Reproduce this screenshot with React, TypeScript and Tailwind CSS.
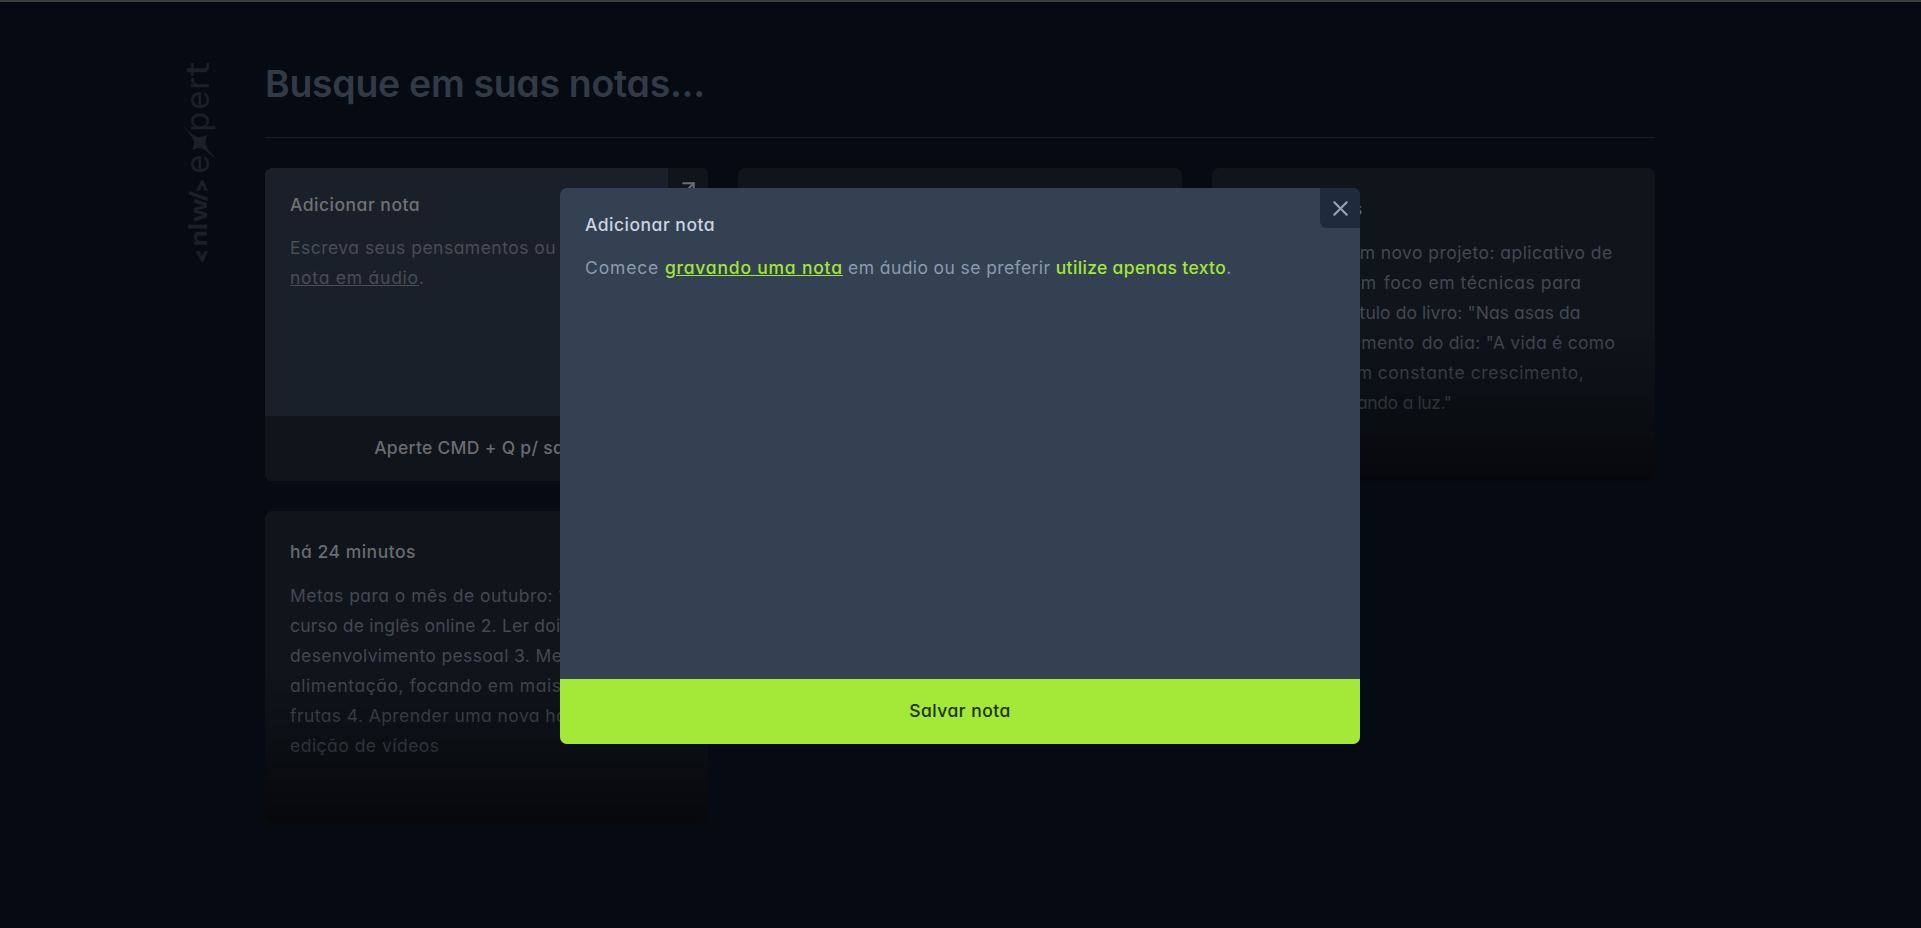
import { ArrowUpRight, X } from "lucide-react";
import type { ReactNode } from "react";

type Line = { prefix?: string; prefixClass?: string; text: string; spacing: string };

const goals: Line[] = [
  { text: "Metas para o mês de outubro: 1. Iniciar", spacing: "tracking-[0.46px]" },
  { text: "curso de inglês online 2. Ler dois livros", spacing: "tracking-[0.2px]" },
  { text: "desenvolvimento pessoal 3. Melhorar", spacing: "tracking-[0.36px]" },
  { text: "alimentação, focando em mais verdes", spacing: "tracking-[0.55px]" },
  { text: "frutas 4. Aprender uma nova habilidade", spacing: "tracking-[0.42px]" },
  { text: "edição de vídeos", spacing: "tracking-[0.48px]" },
];

const ideas: Line[] = [
  { prefix: "Ideias para um", prefixClass: "w-[139px]", text: "novo projeto: aplicativo de", spacing: "tracking-[0.45px]" },
  { prefix: "meditação com", prefixClass: "w-[140px]", text: "foco em técnicas para", spacing: "tracking-[0.57px] [&>*:last-child]:pl-0.5" },
  { prefix: "dormir. Título", prefixClass: "w-[154px]", text: 'do livro: "Nas asas da', spacing: "tracking-[0.06px]" },
  { prefix: 'vida". Pensamento', prefixClass: "w-[178px]", text: 'do dia: "A vida é como', spacing: "tracking-[0.28px] [&>*:last-child]:pl-0.5" },
  { prefix: "um jardim em", prefixClass: "w-[136px]", text: "constante crescimento,", spacing: "tracking-[0.57px]" },
  { prefix: "sempre buscando", prefixClass: "w-[161px]", text: 'a luz."', spacing: "tracking-[-0.4px]" },
];

function Logo() {
  return (
    <svg width="40" height="204" viewBox="0 0 40 204" className="shrink-0 overflow-visible" fill="#1a1f28">
      <g transform="translate(0 202) rotate(-90)">
        <g fontFamily="Open Sans" fontWeight="800">
          <text x="2" y="29" fontSize="19" stroke="#1a1f28" strokeWidth="1">&lt;</text>
          <text x="17.2" y="27" fontSize="24" fontWeight="700" textLength="17" lengthAdjust="spacingAndGlyphs">n</text>
          <text x="33.6" y="27" fontSize="25" fontWeight="700">l</text>
          <text x="42" y="27" fontSize="24" fontWeight="700" textLength="23.5" lengthAdjust="spacingAndGlyphs">w</text>
          <text x="62.5" y="27.5" fontSize="26" fontWeight="700">/</text>
          <text x="73" y="29" fontSize="19" stroke="#1a1f28" strokeWidth="1">&gt;</text>
        </g>
        <g fontFamily="Inter" fontSize="33">
          <text x="90.3 132.3 154.3 174.3" y="29">eper</text>
          <text x="187.6" y="29" textLength="15" lengthAdjust="spacingAndGlyphs">t</text>
        </g>
        <path d="M139 2C131 10 127 15 127 19C127 23 129 26 130 28C127 26 124 25.5 121 25.5C116 26 110 32 104 37C111 29 116 24 116 19.5C116 16 115 14 113 11.5C116 13.5 119 14 122 14C127 13 133 7 139 2Z" />
      </g>
    </svg>
  );
}

function NoteCard({ date, lines = [] }: { date: string; lines?: Line[] }) {
  return (
    <article className="relative flex flex-col gap-4 overflow-hidden rounded-[7px] bg-[#10141b] px-[25px] pt-7">
      <h2 className="pb-px text-[17.5px] leading-[25px] font-medium tracking-[0.5px] text-[#696b70]">{date}</h2>
      <div className="text-[17.5px] leading-[30px] whitespace-nowrap text-[#444852]">
        {lines.map((line) => (
          <p key={line.text} className={`flex gap-[5px] ${line.spacing}`}>
            {line.prefix && <span className={`flex shrink-0 justify-end ${line.prefixClass}`}>{line.prefix}</span>}
            <span>{line.text}</span>
          </p>
        ))}
      </div>
      <div className="absolute inset-x-0 bottom-0 h-1/2 bg-linear-to-t from-black/60 to-black/0" />
    </article>
  );
}

function NewNoteCard() {
  return (
    <article className="relative flex flex-col overflow-hidden rounded-[7px] bg-[#1a2029]">
      <div className="flex flex-1 flex-col gap-[15px] p-[25px]">
        <h2 className="pb-0.5 text-[17.5px] leading-[23px] font-medium tracking-[0.5px] text-[#707275]">Adicionar nota</h2>
        <div className="text-[17.5px] leading-[30px] whitespace-nowrap text-[#484d57]">
          <p className="tracking-[0.48px]">Escreva seus pensamentos ou grave uma</p>
          <p>
            <span className="tracking-[0.76px] underline">nota em áudio</span>.
          </p>
        </div>
      </div>
      <footer className="bg-[#10141b] pt-[19px] pb-[21px] text-center text-[17.5px] leading-[25px] font-medium tracking-[0.29px] text-[#6a6c71]">
        <span className="inline-block w-[225px] text-left whitespace-nowrap">Aperte CMD + Q p/ salvar</span>
      </footer>
      <button className="absolute top-0 right-0 rounded-bl-[7px] bg-[#10141b] p-[7.5px] text-[#6a6d73]">
        <ArrowUpRight size={25} />
      </button>
    </article>
  );
}

function Accent({ className, children }: { className: string; children: ReactNode }) {
  return <button className={`font-medium text-[#a3e635] ${className}`}>{children}</button>;
}

function NewNoteDialog() {
  return (
    <div
      role="dialog"
      className="absolute top-[188px] left-[560px] flex h-[556px] w-[800px] flex-col overflow-hidden rounded-[7px] bg-[#334153]"
    >
      <button className="absolute top-0 right-0 rounded-bl-[7px] bg-[#1f2a3c] p-[7.5px] text-[#94a3b8]">
        <X size={25} />
      </button>
      <div className="flex flex-1 flex-col gap-[15px] p-[25px] text-[17.5px]">
        <h2 className="pb-0.5 leading-[23px] font-medium tracking-[0.5px] text-[#cbd5e1]">Adicionar nota</h2>
        <p className="leading-[30px] whitespace-pre text-[#8c9bb0]">
          <span className="tracking-[0.85px]">{"Comece "}</span>
          <Accent className="tracking-[0.79px] underline">gravando uma nota</Accent>
          <span className="tracking-[0.4px]">{" em áudio ou se preferir "}</span>
          <Accent className="tracking-[0.34px]">utilize apenas texto</Accent>.
        </p>
      </div>
      <button className="bg-[#a4e938] pt-[19px] pb-[21px] text-[17.5px] leading-[25px] font-medium tracking-[0.47px] text-[#1f300e]">
        Salvar nota
      </button>
    </div>
  );
}

export default function App() {
  return (
    <div className="relative h-[928px] w-full overflow-hidden border-t-2 border-[#3b3c3c] bg-[#050a13] font-['Inter',sans-serif] [font-feature-settings:'cv11']">
      <div className="flex gap-[45px] pt-[60px] pl-[180px]">
        <Logo />
        <main className="w-[1390px]">
          <h1 className="pb-px text-[37.5px] leading-[44px] font-semibold tracking-[-0.32px] text-[#323a45]">
            Busque em suas notas...
          </h1>
          <hr className="my-[30px] border-t border-[#171c25]" />
          <section className="grid auto-rows-[312.5px] grid-cols-3 gap-[30px]">
            <NewNoteCard />
            <NoteCard date="há 2 minutos" />
            <NoteCard date="há 20 minutos" lines={ideas} />
            <NoteCard date="há 24 minutos" lines={goals} />
          </section>
        </main>
      </div>
      <NewNoteDialogLayer />
    </div>
  );
}

function NewNoteDialogLayer() {
  return (
    <div className="absolute -top-0.5 left-0">
      <NewNoteDialog />
    </div>
  );
}
